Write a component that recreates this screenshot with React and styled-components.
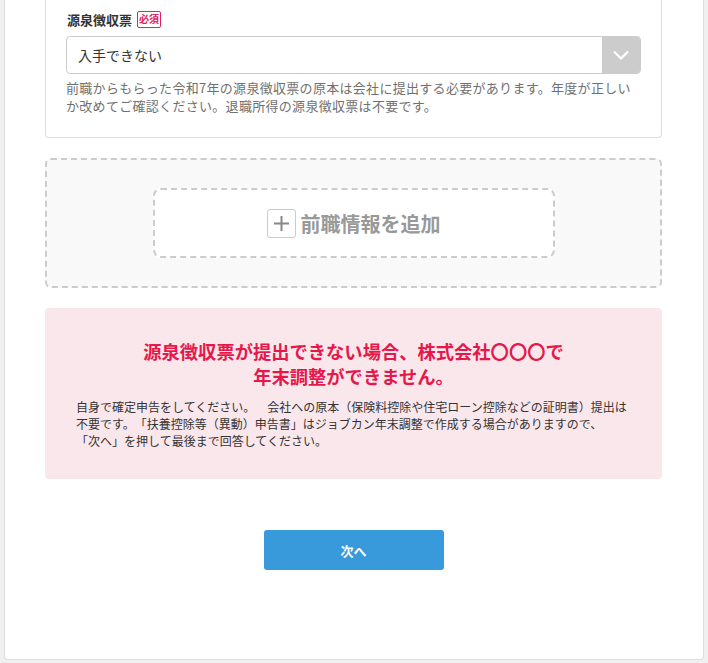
import React from "react";
import styled, { createGlobalStyle } from "styled-components";

const GlobalStyle = createGlobalStyle`
    body {
        margin: 0;
        background: #f0f0f0;
        font-family: "Noto Sans CJK JP", "Noto Sans", sans-serif;
        color: #333;
        text-spacing-trim: space-all;
    }
`;

const Page = styled.div`
    width: 700px;
    margin: 0 4px 0 4px;
    padding: 0 41px 89px 40px;
    box-sizing: border-box;
    background: #fff;
    border: 1px solid #ddd;
    border-top: none;
    border-radius: 0 0 4px 4px;
`;

const FormCard = styled.section`
    border: 1px solid #ddd;
    border-top: none;
    border-radius: 0 0 4px 4px;
    padding: 9px 20px 22px;
`;

const LabelRow = styled.div`
    display: flex;
    align-items: center;
    gap: 5px;
    height: 20px;
    padding-left: 1px;
`;

const Label = styled.span`
    font-size: 13px;
    font-weight: bold;
    color: #333;
`;

const Badge = styled.span`
    display: inline-flex;
    align-items: center;
    justify-content: center;
    width: 24px;
    height: 17px;
    box-sizing: border-box;
    border: 1px solid #e0245e;
    border-radius: 2px;
    color: #e0245e;
    font-size: 10px;
    font-weight: bold;
    line-height: 1;
`;

const Select = styled.div`
    margin-top: 7px;
    display: flex;
    height: 38px;
    box-sizing: border-box;
    border: 1px solid #ccc;
    border-radius: 4px;
    overflow: hidden;
`;

const SelectValue = styled.div`
    flex: 1;
    display: flex;
    align-items: center;
    padding-left: 11px;
    font-size: 14px;
    color: #333;
`;

const SelectArrow = styled.div`
    width: 38px;
    display: flex;
    align-items: center;
    justify-content: center;
    background: #ccc;
`;

const Help = styled.p`
    margin: 5px 0 0;
    font-size: 13px;
    line-height: 18px;
    letter-spacing: 0.3px;
    color: #707070;
`;

const AddArea = styled.div`
    margin-top: 20px;
    padding: 28px 0;
    display: flex;
    justify-content: center;
    background: #f9f9f9;
    border: 2px dashed #ccc;
    border-radius: 6px;
`;

const AddButton = styled.button`
    width: 402px;
    height: 70px;
    display: flex;
    align-items: center;
    justify-content: center;
    gap: 5px;
    background: #fff;
    border: 2px dashed #ccc;
    border-radius: 8px;
    font-family: inherit;
    font-size: 20px;
    font-weight: bold;
    color: #999;
    cursor: pointer;
`;

const PlusBox = styled.span`
    width: 29px;
    height: 29px;
    box-sizing: border-box;
    display: flex;
    align-items: center;
    justify-content: center;
    border: 1px solid #ccc;
    border-radius: 3px;
    background: #fff;
`;

const Notice = styled.div`
    margin-top: 20px;
    padding: 31px 31px 30px;
    background: #fae7eb;
    border-radius: 4px;
`;

const NoticeTitle = styled.h2`
    margin: 0;
    text-align: center;
    font-size: 18.3px;
    line-height: 25px;
    font-weight: bold;
    color: #e6184b;
`;

const NoticeBody = styled.p`
    margin: 9px 0 0;
    font-size: 12px;
    line-height: 17px;
    color: #333;
`;

const Actions = styled.div`
    margin-top: 51px;
    display: flex;
    justify-content: center;
`;

const NextButton = styled.button`
    width: 180px;
    height: 40px;
    border: none;
    border-radius: 3px;
    background: #3899db;
    color: #fff;
    font-family: inherit;
    font-size: 13px;
    font-weight: bold;
    cursor: pointer;
`;

function App() {
    return (
        <>
            <GlobalStyle />
            <Page>
                <FormCard>
                    <LabelRow>
                        <Label>源泉徴収票</Label>
                        <Badge>必須</Badge>
                    </LabelRow>
                    <Select>
                        <SelectValue>入手できない</SelectValue>
                        <SelectArrow>
                            <svg width="18" height="18" viewBox="0 0 18 18">
                                <path
                                    d="M2 5.5 L9 12.5 L16 5.5"
                                    fill="none"
                                    stroke="#fff"
                                    strokeWidth="2.2"
                                />
                            </svg>
                        </SelectArrow>
                    </Select>
                    <Help>
                        前職からもらった令和7年の源泉徴収票の原本は会社に提出する必要があります。年度が正しいか改めてご確認ください。退職所得の源泉徴収票は不要です。
                    </Help>
                </FormCard>

                <AddArea>
                    <AddButton>
                        <PlusBox>
                            <svg width="17" height="17" viewBox="0 0 17 17">
                                <path
                                    d="M8.5 1 V16 M1 8.5 H16"
                                    stroke="#888"
                                    strokeWidth="2"
                                />
                            </svg>
                        </PlusBox>
                        前職情報を追加
                    </AddButton>
                </AddArea>

                <Notice>
                    <NoticeTitle>
                        源泉徴収票が提出できない場合、株式会社〇〇〇で
                        <br />
                        年末調整ができません。
                    </NoticeTitle>
                    <NoticeBody>
                        自身で確定申告をしてください。　会社への原本（保険料控除や住宅ローン控除などの証明書）提出は不要です。「扶養控除等（異動）申告書」はジョブカン年末調整で作成する場合がありますので、
                        <br />
                        「次へ」を押して最後まで回答してください。
                    </NoticeBody>
                </Notice>

                <Actions>
                    <NextButton>次へ</NextButton>
                </Actions>
            </Page>
        </>
    );
}

export default App;
